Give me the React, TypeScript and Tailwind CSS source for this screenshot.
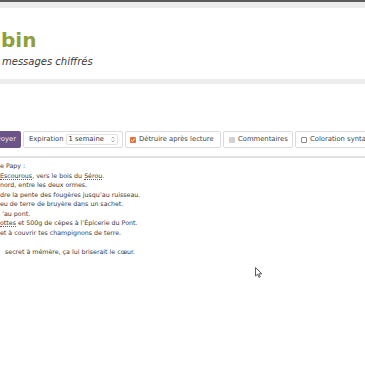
import React from 'react';

const lines: { err?: string; rest: string; indent?: number }[] = [
    { rest: 'e Papy :' },
    { err: 'Escourous', rest: ', vers le bois du ' },
    { rest: 'nord, entre les deux ormes.' },
    { rest: 'dre la pente des fougères jusqu\u2019au ruisseau.' },
    { rest: 'eu de terre de bruyère dans un sachet.' },
    { rest: '\u2019au pont.', indent: 2 },
    { err: 'ottes', rest: ' et 500g de cèpes à l\u2019Épicerie du Pont.' },
    { rest: 'et à couvrir tes champignons de terre.' },
    { rest: '\u00a0' },
    { rest: 'secret à mémère, ça lui briserait le cœur.', indent: 5 },
];

const squiggle = 'inline-block border-b border-dotted border-[#e03030] leading-[7px]';

function Check({ kind }: { kind: 'on' | 'disabled' | 'off' }) {
    if (kind === 'on') {
        return (
            <span className="flex h-[6px] w-[6px] shrink-0 items-center justify-center rounded-[1px] bg-[#e4703a]">
                <svg viewBox="0 0 6 6" className="h-[6px] w-[6px]">
                    <path d="M1.2 3.1 L2.5 4.4 L4.9 1.6" fill="none" stroke="#fff" strokeWidth="1" />
                </svg>
            </span>
        );
    }
    if (kind === 'disabled') {
        return <span className="h-[6px] w-[6px] shrink-0 rounded-[1px] bg-[#d4d2d0]" />;
    }
    return <span className="h-[6px] w-[6px] shrink-0 rounded-[1px] border border-[#8a8a8a] bg-white" />;
}

export default function App() {
    return (
        <div
            className="relative h-[365px] w-[365px] overflow-hidden bg-white text-[#333]"
            style={{ fontFamily: '"DejaVu Sans", sans-serif' }}
        >
            <div className="h-[2px] bg-[#5b5b5b]" />
            <div className="h-[6px] bg-[#ececec]" />

            {/* header */}
            <header className="h-[71px] bg-white pt-[20px] pl-[1px]">
                <h1 className="text-[20px] font-bold leading-[24px] text-[#8fa03a]">bin</h1>
                <p className="mt-[4px] pl-[1px] text-[10px] italic leading-[12px] text-[#3a3a3a]">messages chiffrés</p>
            </header>
            <div className="h-[5px] bg-[#ececec]" />

            {/* toolbar */}
            <div className="mt-[47px] flex h-[17px] items-stretch gap-[2px] whitespace-nowrap text-[6.8px] text-[#444]">
                <button className="flex w-[21px] shrink-0 items-center justify-end overflow-hidden rounded-r-[2px] bg-[#6a5489] pr-[5px] text-[6.8px] text-[#eee]">
                    Envoyer
                </button>
                <div className="flex w-[100px] shrink-0 items-center rounded-[2px] border border-[#dcdcdc] bg-white pl-[5px]">
                    <span>Expiration</span>
                    <span className="ml-[2px] flex h-[11px] w-[52px] items-center justify-between rounded-[2px] border border-[#e2e2e2] pl-[2px] pr-[2px] text-[#333]">
                        1 semaine
                        <svg viewBox="0 0 4 8" className="h-[7px] w-[4px]">
                            <path d="M0.5 3 L2 1.3 L3.5 3 M0.5 5 L2 6.7 L3.5 5" fill="none" stroke="#777" strokeWidth="0.8" />
                        </svg>
                    </span>
                </div>
                <div className="flex w-[96px] shrink-0 items-center gap-[3px] rounded-[2px] border border-[#dcdcdc] bg-white pl-[4px]">
                    <Check kind="on" />
                    <span>Détruire après lecture</span>
                </div>
                <div className="flex w-[70px] shrink-0 items-center gap-[3px] rounded-[2px] border border-[#dcdcdc] bg-white pl-[5px]">
                    <Check kind="disabled" />
                    <span>Commentaires</span>
                </div>
                <div className="flex w-[90px] shrink-0 items-center gap-[3px] rounded-[2px] border border-[#dcdcdc] bg-white pl-[5px]">
                    <Check kind="off" />
                    <span>Coloration syntaxique</span>
                </div>
            </div>

            <div className="mt-[8px] h-[2px] bg-[#e2e2e2]" />

            {/* message */}
            <div className="pt-[3px] text-[6.3px] leading-[9.5px] text-[#3a3a3a] whitespace-pre">
                {lines.map((l, i) => (
                    <div key={i} style={{ paddingLeft: l.indent ?? 0 }}>
                        {l.err && <span className={squiggle}>{l.err}</span>}
                        {l.rest}
                        {i === 1 && (
                            <>
                                <span className={squiggle}>Sérou</span>.
                            </>
                        )}
                    </div>
                ))}
            </div>

            {/* mouse pointer */}
            <svg viewBox="0 0 8 12" className="absolute left-[255px] top-[267px] h-[12px] w-[8px]">
                <path d="M0.5 0.5 L0.5 9 L2.6 7.2 L4 10.4 L5.3 9.8 L3.9 6.8 L6.8 6.8 Z" fill="#fff" stroke="#333" strokeWidth="0.8" />
            </svg>
        </div>
    );
}
